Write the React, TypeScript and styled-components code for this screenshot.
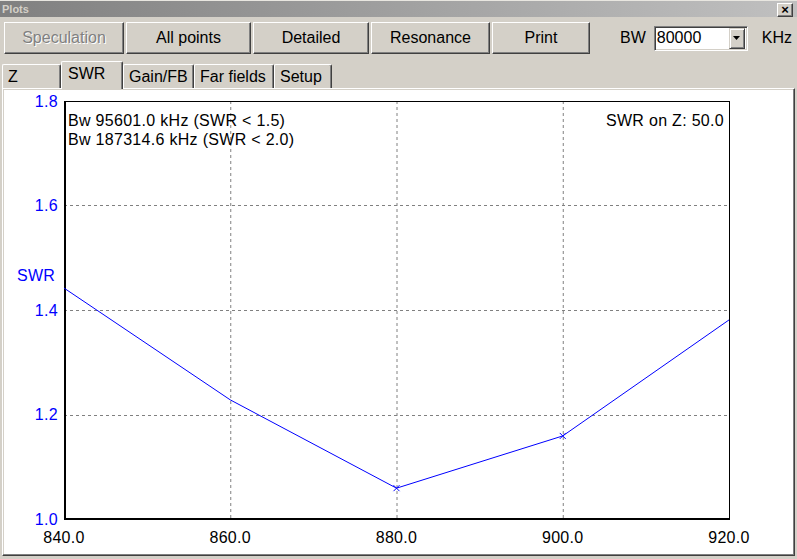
import React from "react";
import styled, { createGlobalStyle } from "styled-components";

const GlobalStyle = createGlobalStyle`
  html, body {
    margin: 0;
    padding: 0;
    overflow: hidden;
    background: #d4d0c8;
  }
  body {
    font-family: "Liberation Sans", Arial, sans-serif;
  }
`;

const Window = styled.div`
  width: 797px;
  height: 559px;
  box-sizing: border-box;
  background: #d4d0c8;
  border-top: 1px solid #e8e6e0;
  display: flex;
  flex-direction: column;
`;

const TitleBar = styled.div`
  height: 16px;
  flex: none;
  display: flex;
  align-items: center;
  justify-content: space-between;
  padding: 0 4px 0 2px;
  background: linear-gradient(to right, #808080, #c0c0c0);
`;

const TitleText = styled.span`
  font-size: 11px;
  font-weight: bold;
  color: #d4d0c8;
`;

const CloseButton = styled.button`
  width: 16px;
  height: 14px;
  padding: 0;
  margin-top: 2px;
  box-sizing: border-box;
  background: #d4d0c8;
  border: 1px solid;
  border-color: #fff #404040 #404040 #fff;
  box-shadow: inset -1px -1px #808080;
  font-size: 13px;
  font-weight: bold;
  line-height: 10px;
  color: #000;
  font-family: "Liberation Sans", Arial, sans-serif;
`;

const Toolbar = styled.div`
  flex: none;
  height: 32px;
  display: flex;
  align-items: center;
  gap: 2px;
  padding: 5px 4px 0 4px;
`;

const PushButton = styled.button<{ $w: number; $disabled?: boolean }>`
  width: ${(p) => p.$w}px;
  height: 32px;
  box-sizing: border-box;
  background: #d4d0c8;
  border: 1px solid;
  border-color: #fff #404040 #404040 #fff;
  box-shadow: inset -1px -1px #808080;
  font-family: "Liberation Sans", Arial, sans-serif;
  font-size: 16px;
  padding: 0;
  color: ${(p) => (p.$disabled ? "#808080" : "#000")};
  text-shadow: ${(p) => (p.$disabled ? "1px 1px #ffffff" : "none")};
`;

const BwGroup = styled.div`
  display: flex;
  align-items: center;
  margin-left: 28px;
  font-size: 16px;
  color: #000;
`;

const Combo = styled.div`
  width: 94px;
  height: 25px;
  margin-left: 8px;
  box-sizing: border-box;
  background: #fff;
  border: 1px solid;
  border-color: #808080 #fff #fff #808080;
  box-shadow: inset 1px 1px #404040, inset -1px -1px #d4d0c8;
  display: flex;
  align-items: center;
  justify-content: space-between;
  padding: 0 2px 0 2px;
`;

const ComboValue = styled.span`
  font-size: 16px;
  color: #000;
`;

const DropButton = styled.div`
  width: 16px;
  height: 21px;
  box-sizing: border-box;
  background: #d4d0c8;
  border: 1px solid;
  border-color: #d4d0c8 #404040 #404040 #d4d0c8;
  box-shadow: inset 1px 1px #fff, inset -1px -1px #808080;
  display: flex;
  align-items: center;
  justify-content: center;
`;

const Unit = styled.span`
  margin-left: 14px;
`;

const TabStrip = styled.div`
  flex: none;
  height: 27px;
  margin-top: 7px;
  padding-left: 2px;
  display: flex;
  align-items: flex-end;
  position: relative;
  z-index: 1;
`;

const Tab = styled.div<{ $w: number; $active?: boolean }>`
  width: ${(p) => p.$w}px;
  height: ${(p) => (p.$active ? 28 : 24)}px;
  margin-bottom: ${(p) => (p.$active ? -1 : 0)}px;
  box-sizing: border-box;
  background: #d4d0c8;
  border-left: 1px solid #fff;
  border-top: 1px solid #fff;
  border-right: 1px solid #404040;
  border-radius: 2px 2px 0 0;
  box-shadow: inset -1px 0 #808080;
  display: flex;
  align-items: center;
  padding: ${(p) => (p.$active ? "0 0 4px 6px" : "0 0 0 5px")};
  font-size: 16px;
  color: #000;
`;

const Panel = styled.div`
  flex: 1;
  margin: 0 2px 3px 2px;
  background: #fff;
  border: 1px solid;
  border-color: #fff #404040 #404040 #fff;
  box-shadow: inset -1px -1px #808080, inset 1px 1px #d4d0c8;
  overflow: hidden;
`;

const ChartSvg = styled.svg`
  display: block;
  font-family: "Liberation Sans", Arial, sans-serif;
  font-size: 16px;
  letter-spacing: 0.3px;
`;

const buttons = [
  { label: "Speculation", w: 120, disabled: true },
  { label: "All points", w: 125 },
  { label: "Detailed", w: 116 },
  { label: "Resonance", w: 119 },
  { label: "Print", w: 98 },
];

const tabs = [
  { label: "Z", w: 59 },
  { label: "SWR", w: 62, active: true },
  { label: "Gain/FB", w: 71 },
  { label: "Far fields", w: 80 },
  { label: "Setup", w: 58 },
];

const L = 61;
const T = 12;
const R = 726;
const B = 430;
const xs = [840, 860, 880, 900, 920];
const ys = [1.0, 1.2, 1.4, 1.6, 1.8];
const data = [1.442, 1.228, 1.059, 1.159, 1.381];
// only the inner points show a cross in the original
const marked = [2, 3];

const px = (i: number) => L + (i * (R - L)) / 4;
const py = (v: number) => B - ((v - 1) / 0.8) * (B - T);

function Chart() {
  const pts = data.map((v, i) => [px(i), py(v)]);
  return (
    <ChartSvg width={789} height={470}>
      {/* grid */}
      {[1, 2, 3].map((i) => (
        <line
          key={"gx" + i}
          x1={px(i) + 0.5}
          x2={px(i) + 0.5}
          y1={T}
          y2={B}
          stroke="#808080"
          strokeDasharray="3 3"
        />
      ))}
      {[1.2, 1.4, 1.6].map((v) => (
        <line
          key={"gy" + v}
          x1={L}
          x2={R}
          y1={Math.round(py(v)) + 0.5}
          y2={Math.round(py(v)) + 0.5}
          stroke="#808080"
          strokeDasharray="3 3"
        />
      ))}
      {/* frame */}
      <rect x={L + 0.5} y={T + 0.5} width={R - L} height={B - T} fill="none" stroke="#000" />
      <line x1={L + 1} x2={L + 1} y1={T} y2={B + 1} stroke="#000" strokeWidth={2} />
      <line x1={L} x2={R + 1} y1={B} y2={B} stroke="#000" strokeWidth={2} />

      {/* y axis labels */}
      {ys.map((v) => (
        <text key={"ly" + v} x={55} y={py(v)} textAnchor="end" dominantBaseline="central" fill="#0000ff">
          {v.toFixed(1)}
        </text>
      ))}
      <text x={14} y={186} dominantBaseline="central" fill="#0000ff">
        SWR
      </text>

      {/* x axis labels */}
      {xs.map((f, i) => (
        <text key={"lx" + f} x={px(i)} y={448} textAnchor="middle" dominantBaseline="central" fill="#000">
          {f.toFixed(1)}
        </text>
      ))}

      {/* info */}
      <text x={65} y={31} dominantBaseline="central" fill="#000">
        Bw 95601.0 kHz (SWR &lt; 1.5)
      </text>
      <text x={65} y={50} dominantBaseline="central" fill="#000">
        Bw 187314.6 kHz (SWR &lt; 2.0)
      </text>
      <text x={721} y={31} textAnchor="end" dominantBaseline="central" fill="#000">
        SWR on Z: 50.0
      </text>

      {/* data */}
      <polyline points={pts.map((p) => p.join(",")).join(" ")} fill="none" stroke="#0000ff" strokeWidth={1} />
      {marked.map((i) => {
        const [x, y] = pts[i];
        return (
          <path
            key={"m" + i}
            d={`M${x - 3},${y - 3} L${x + 3},${y + 3} M${x - 3},${y + 3} L${x + 3},${y - 3}`}
            stroke="#0000ff"
            strokeWidth={1}
          />
        );
      })}
    </ChartSvg>
  );
}

export default function App() {
  return (
    <>
      <GlobalStyle />
      <Window>
        <TitleBar>
          <TitleText>Plots</TitleText>
          <CloseButton>×</CloseButton>
        </TitleBar>
        <Toolbar>
          {buttons.map((b) => (
            <PushButton key={b.label} $w={b.w} $disabled={b.disabled}>
              {b.label}
            </PushButton>
          ))}
          <BwGroup>
            BW
            <Combo>
              <ComboValue>80000</ComboValue>
              <DropButton>
                <svg width="7" height="4" viewBox="0 0 7 4">
                  <path d="M0 0 H7 L3.5 4 Z" fill="#000" />
                </svg>
              </DropButton>
            </Combo>
            <Unit>KHz</Unit>
          </BwGroup>
        </Toolbar>
        <TabStrip>
          {tabs.map((t) => (
            <Tab key={t.label} $w={t.w} $active={t.active}>
              {t.label}
            </Tab>
          ))}
        </TabStrip>
        <Panel>
          <Chart />
        </Panel>
      </Window>
    </>
  );
}
